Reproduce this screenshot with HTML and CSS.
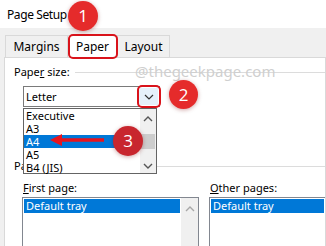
FILE: index.html
```html
<!DOCTYPE html>
<html>
<head>
<meta charset="utf-8">
<title>Page Setup</title>
<link rel="stylesheet" href="styles.css">
</head>
<body>
<div class="dialog">
  <div class="titlebar">Page Setup</div>

  <div class="body">
    <div class="tabs">
      <div class="tab tab-margins">Margins</div>
      <div class="tab tab-paper active">Paper</div>
      <div class="tab tab-layout">Layout</div>
    </div>

    <div class="page">
      <div class="group-head">
        <span class="group-label">Pape<u>r</u> size:</span>
        <span class="group-line"></span>
      </div>

      <div class="combo">
        <span class="combo-text">Letter</span>
        <span class="combo-btn">
          <svg width="10" height="6" viewBox="0 0 10 6"><polyline points="1,1 5,5 9,1" fill="none" stroke="#333" stroke-width="1.2"/></svg>
        </span>
      </div>

      <div class="group-head source-head">
        <span class="group-label">Paper source</span>
        <span class="group-line"></span>
      </div>

      <div class="sources">
        <div class="source source-first">
          <div class="source-label"><u>F</u>irst page:</div>
          <div class="listbox">
            <div class="list-sel">Default tray</div>
            <div class="list-scroll">
              <svg width="10" height="6" viewBox="0 0 10 6"><polyline points="1,5 5,1 9,5" fill="none" stroke="#a8a8a8" stroke-width="1.4"/></svg>
            </div>
          </div>
        </div>
        <div class="source source-other">
          <div class="source-label"><u>O</u>ther pages:</div>
          <div class="listbox">
            <div class="list-sel">Default tray</div>
          </div>
        </div>
      </div>
    </div>
  </div>

  <!-- open dropdown of the combo -->
  <div class="dropdown">
    <div class="drop-items">
      <div class="drop-item">Executive</div>
      <div class="drop-item">A3</div>
      <div class="drop-item selected">A4</div>
      <div class="drop-item">A5</div>
      <div class="drop-item">B4 (JIS)</div>
    </div>
    <div class="drop-scroll">
      <svg class="arrow-up" width="10" height="6" viewBox="0 0 10 6"><polyline points="1,5 5,1 9,5" fill="none" stroke="#555" stroke-width="1.4"/></svg>
      <div class="thumb"></div>
      <svg class="arrow-down" width="10" height="6" viewBox="0 0 10 6"><polyline points="1,1 5,5 9,1" fill="none" stroke="#555" stroke-width="1.4"/></svg>
    </div>
  </div>

  <!-- annotations -->
  <div class="watermark">@thegeekpage.com</div>
  <div class="mark mark-tab"></div>
  <div class="mark mark-btn"></div>
  <svg class="red-arrow" width="56" height="14" viewBox="0 0 56 14">
    <line x1="8" y1="7" x2="54" y2="7" stroke="#e8141c" stroke-width="3.5"/>
    <polygon points="0,7 12,1 12,13" fill="#e8141c"/>
  </svg>
  <div class="badge badge-1">1</div>
  <div class="badge badge-2">2</div>
  <div class="badge badge-3">3</div>
</div>
</body>
</html>
```

FILE: styles.css
```css
* {
  box-sizing: border-box;
}

body {
  margin: 0;
  font-family: "Noto Sans", "Open Sans", sans-serif;
  font-size: 11px;
  color: #000;
  background: #f0f0f0;
  overflow: hidden;
}

.dialog {
  position: relative;
  width: 326px;
  height: 246px;
  overflow: hidden;
}

/* title bar */
.titlebar {
  height: 28px;
  background: #fff;
  padding-left: 7px;
  font-size: 12px;
  letter-spacing: -0.4px;
  line-height: 29px;
}

.body {
  height: 218px;
  background: #f0f0f0;
  padding: 7px 0 0 4px;
}

/* tabs */
.tabs {
  display: flex;
  height: 22px;
  padding-left: 1px;
}

.tab {
  border: 1px solid #d9d9d9;
  border-bottom: none;
  margin-right: -1px;
  line-height: 21px;
  text-align: center;
  background: #f0f0f0;
  font-size: 12px;
}

.tab-margins { width: 63px; }
.tab-paper { width: 51px; }
.tab-layout { width: 53px; }

.tab.active {
  background: #fff;
}

/* tab page */
.page {
  height: 200px;
  background: #fff;
  border: 1px solid #d9d9d9;
  padding: 7px 0 0 9px;
}

.group-head {
  display: flex;
  align-items: center;
  height: 14px;
  line-height: 14px;
}

.group-label {
  white-space: nowrap;
}

.group-line {
  flex: 1;
  height: 1px;
  margin-left: 5px;
  background: #dcdcdc;
}

.combo {
  display: flex;
  align-items: center;
  justify-content: space-between;
  width: 137px;
  height: 21px;
  margin: 7px 0 0 9px;
  border: 1px solid #7a7a7a;
  padding: 0 1px 0 2px;
}

.combo-btn {
  display: flex;
  align-items: center;
  justify-content: center;
  width: 19px;
  height: 17px;
  background: #e5f1fb;
}

.source-head {
  margin-top: 52px;
}

/* paper source lists */
.sources {
  display: flex;
  gap: 10px;
  margin: 8px 0 0 8px;
}

.source-label {
  height: 14px;
  line-height: 14px;
  padding-left: 1px;
}

.source-first {
  width: 177px;
}

.source-other {
  flex: 1;
}

.listbox {
  position: relative;
  height: 60px;
  margin-top: 2px;
  border: 1px solid #828790;
  padding: 1px;
}

.source-other .listbox {
  border-right: none;
}

.list-sel {
  height: 14px;
  line-height: 14px;
  padding-left: 2px;
  margin-right: 17px;
  background: #0078d7;
  color: #fff;
}

.source-other .list-sel {
  margin-right: 0;
}

.list-scroll {
  position: absolute;
  top: 0;
  right: 0;
  width: 17px;
  height: 100%;
  background: #f0f0f0;
  display: flex;
  justify-content: center;
  padding-top: 8px;
}

/* dropdown of the combo */
.dropdown {
  position: absolute;
  left: 23px;
  top: 108px;
  width: 134px;
  height: 66px;
  background: #fff;
  border: 1px solid #646464;
  display: flex;
}

.drop-items {
  flex: 1;
}

.drop-item {
  height: 13px;
  line-height: 13px;
  padding-left: 2px;
}

.drop-item.selected {
  background: #0078d7;
  color: #fff;
}

.drop-scroll {
  position: relative;
  width: 16px;
  background: #f0f0f0;
}

.drop-scroll svg {
  position: absolute;
  left: 3px;
}

.arrow-up { top: 7px; }
.arrow-down { top: 54px; }

.thumb {
  position: absolute;
  left: 1px;
  right: 1px;
  top: 25px;
  height: 15px;
  background: #cdcdcd;
}

/* annotations */
.watermark {
  position: absolute;
  left: 135px;
  top: 61px;
  font-size: 15px;
  line-height: 20px;
  color: #cfcfcf;
}

.mark {
  position: absolute;
  border: 2.5px solid #d9131b;
  border-radius: 5px;
}

.mark-tab {
  left: 68px;
  top: 34px;
  width: 50px;
  height: 25px;
}

.mark-btn {
  left: 137px;
  top: 85px;
  width: 24px;
  height: 23px;
}

.red-arrow {
  position: absolute;
  left: 50px;
  top: 133px;
}

.badge {
  position: absolute;
  width: 30px;
  height: 30px;
  border-radius: 50%;
  background: #e52b2b;
  color: #fff;
  font-family: "Open Sans", sans-serif;
  font-size: 17px;
  line-height: 30px;
  text-align: center;
  box-shadow: 0 1px 4px rgba(120, 0, 0, 0.35);
}

.badge-1 { left: 68px; top: 1px; }
.badge-2 { left: 169px; top: 80px; width: 29px; height: 29px; line-height: 29px; }
.badge-3 { left: 113px; top: 126px; background: #c8262e; }
```
